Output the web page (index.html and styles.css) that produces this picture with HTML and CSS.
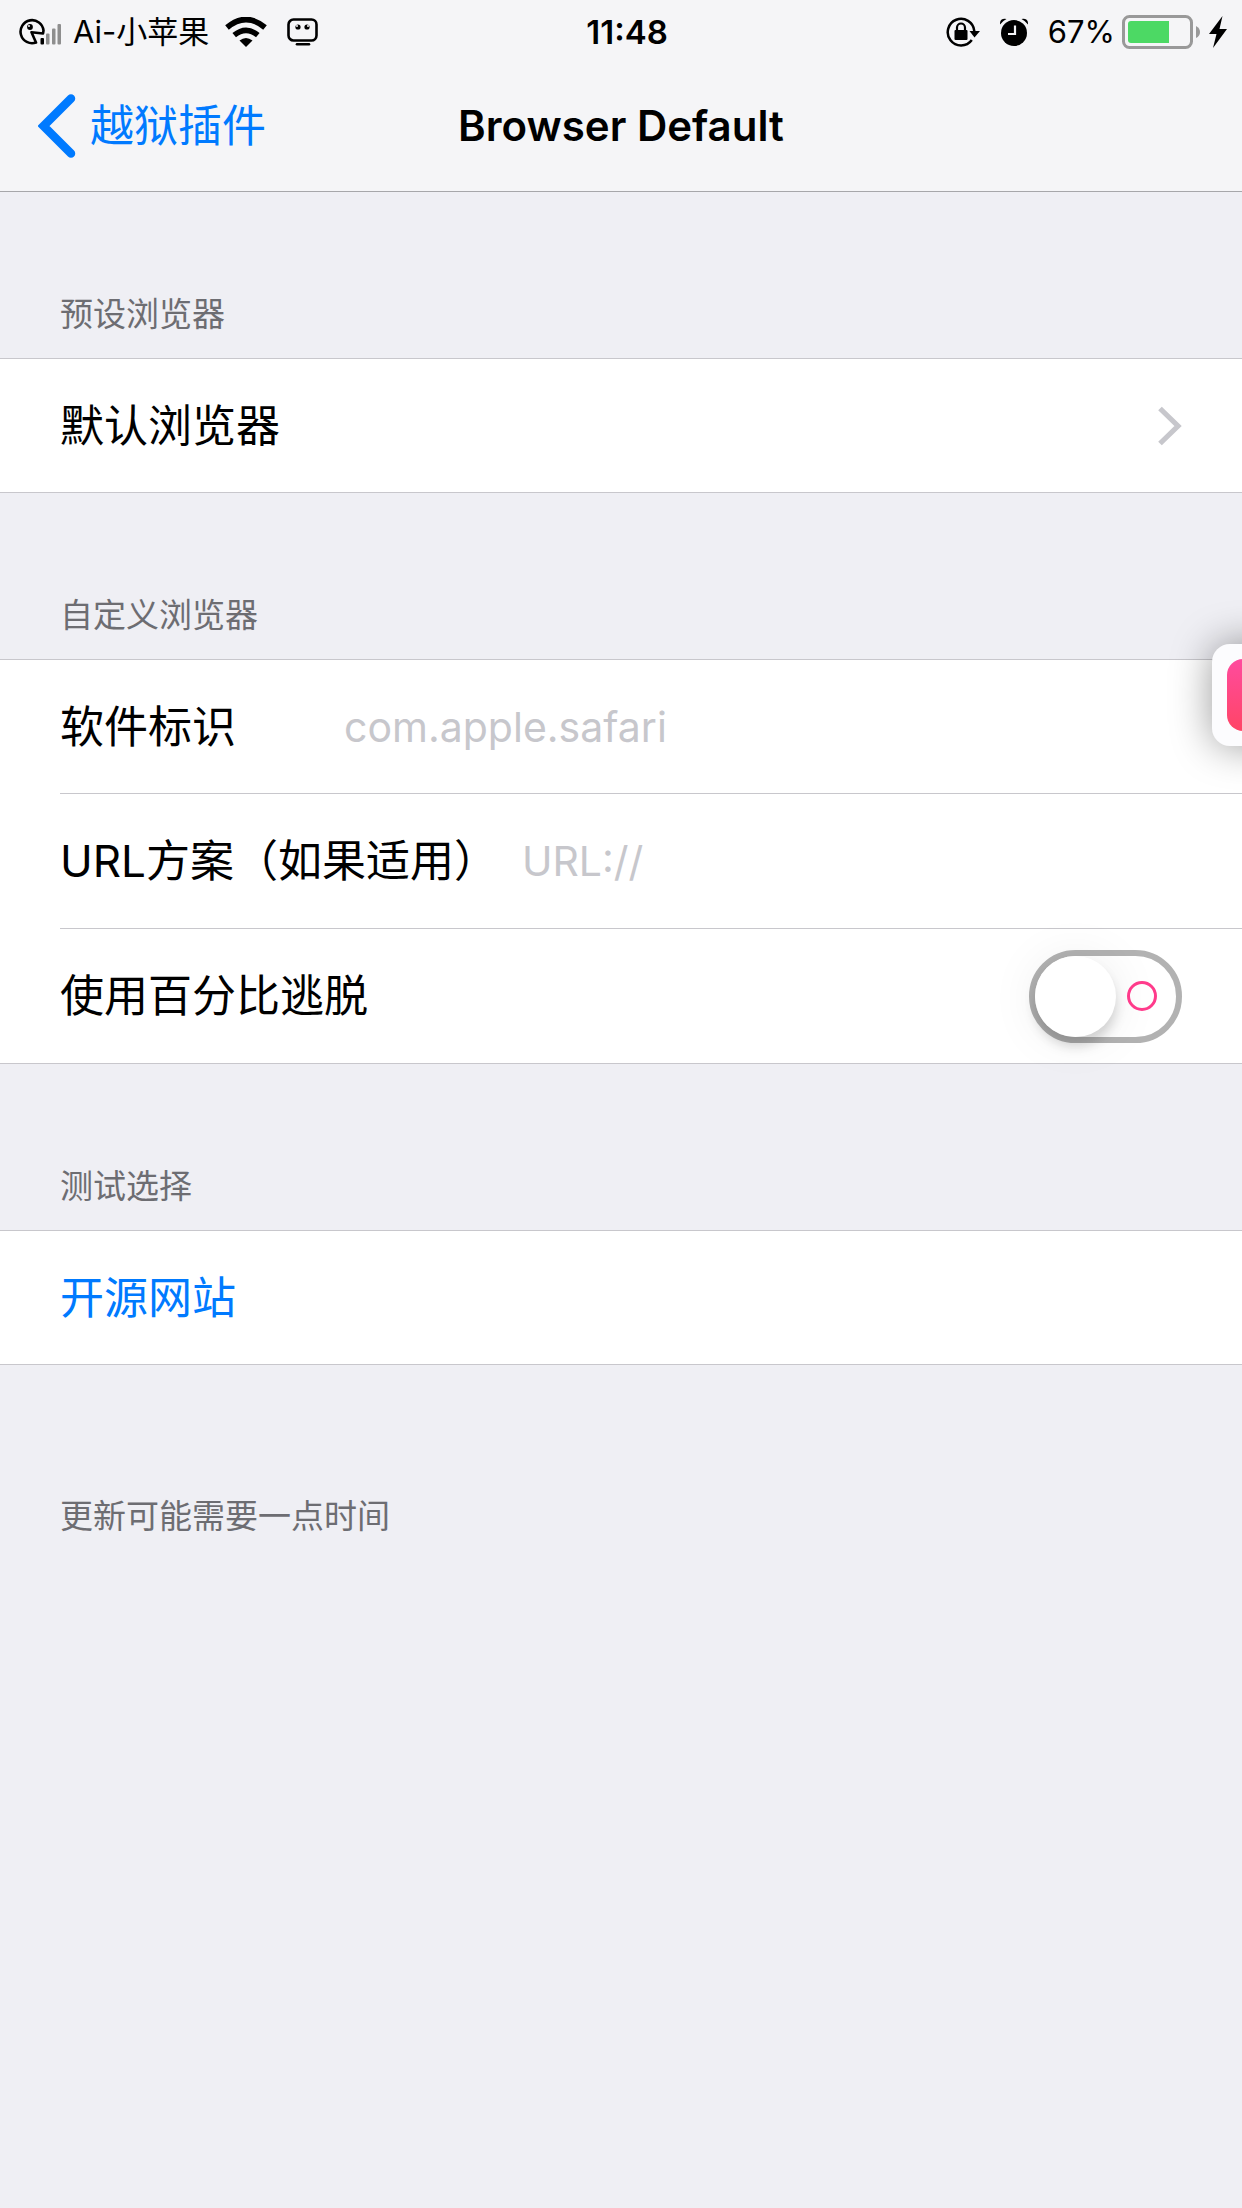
FILE: index.html
```html
<!DOCTYPE html>
<html lang="zh-CN">
<head>
  <meta charset="utf-8">
  <meta name="viewport" content="width=device-width, initial-scale=1">
  <title>Browser Default</title>
  <link rel="stylesheet" href="styles.css">
</head>
<body>
  <header class="top">
    <div class="status">
      <div class="status-left">
        <svg class="icon-signal" width="44" height="28" viewBox="0 0 44 28" aria-hidden="true">
          <path d="M24.500 12.500A11.500 11.500 0 1 0 17 24.500L12.500 14.200L24 15.500Z" fill="none" stroke="#000" stroke-width="2.600" stroke-linejoin="round"/>
          <circle cx="11" cy="9" r="2.900"/>
          <circle cx="10" cy="8" r="1" fill="#f5f5f7"/>
          <rect x="21.500" y="20" width="3.500" height="6.500" rx="1"/>
          <g fill="#8e8e8e">
            <rect x="27" y="15.500" width="3.500" height="11" rx="1"/>
            <rect x="33" y="10.500" width="3.500" height="16" rx="1"/>
            <rect x="38.500" y="6" width="3.500" height="20.500" rx="1"/>
          </g>
        </svg>
        <span class="carrier">Ai-小苹果</span>
        <svg class="icon-wifi" width="42" height="30" viewBox="0 0 42 30" aria-hidden="true">
          <path d="M2 10.500Q21-5.500 40 10.500M9.200 18.200Q21 8.500 32.800 18.200" fill="none" stroke="#000" stroke-width="5.600"/>
          <path d="M21 30L14.500 23.500Q21 18.500 27.500 23.500Z"/>
        </svg>
        <svg width="32" height="28" viewBox="0 0 32 28" aria-hidden="true">
          <rect x="1.500" y="1.500" width="28" height="21" rx="5" fill="none" stroke="#000" stroke-width="2.600"/>
          <circle cx="11" cy="9" r="2.600"/><circle cx="20" cy="9" r="2.600"/>
          <circle cx="10" cy="8" r="1" fill="#f5f5f7"/><circle cx="21" cy="8" r="1" fill="#f5f5f7"/>
          <path d="M10 26.200H22" stroke="#000" stroke-width="2.600" stroke-linecap="round"/>
        </svg>
      </div>
      <time class="clock">11:48</time>
      <div class="status-right">
        <svg width="34" height="30" viewBox="0 0 34 30" aria-hidden="true">
          <path d="M28.300 14A13.300 13.300 0 1 0 25.800 23" fill="none" stroke="#000" stroke-width="2.500"/>
          <path d="M23.500 14H34L28.500 20.500Z"/>
          <rect x="8.500" y="13" width="13" height="10" rx="1"/>
          <path d="M11 14V10.500A4 4 0 0 1 19 10.500V14" fill="none" stroke="#000" stroke-width="2.200"/>
        </svg>
        <svg width="28" height="28" viewBox="0 0 28 28" aria-hidden="true">
          <circle cx="14" cy="15" r="13"/>
          <path d="M0 6.500Q-.5 0 6.500 1Q2.500 3 0 6.500ZM28 6.500Q28.500 0 21.500 1Q25.500 3 28 6.500Z"/>
          <path d="M15 7.500V16H8" fill="none" stroke="#f5f5f7" stroke-width="2.200"/>
        </svg>
        <span class="percent">67%</span>
        <svg class="icon-battery" width="78" height="34" viewBox="0 0 78 34" aria-hidden="true">
          <rect x="1.500" y="1.500" width="68" height="31" rx="6" fill="none" stroke="#999" stroke-width="3"/>
          <path d="M9 6H47V28H9Q6 28 6 25V9Q6 6 9 6Z" fill="#4cd964"/>
          <path d="M74 11Q78 13 78 17T74 23Z" fill="#999"/>
        </svg>
        <svg class="icon-bolt" width="18" height="32" viewBox="0 0 18 32" aria-hidden="true">
          <path d="M13.500 0L0 18H7.500L4 32L18 13H10.500Z"/>
        </svg>
      </div>
    </div>
    <nav class="navbar">
      <a class="back" href="#">
        <svg width="38" height="64" viewBox="0 0 38 64" aria-hidden="true">
          <path d="M33 4.500L5.500 32L33 59.500" fill="none" stroke="#007aff" stroke-width="8.500" stroke-linecap="round" stroke-linejoin="miter"/>
        </svg>
        <span>越狱插件</span>
      </a>
      <h1 class="title">Browser Default</h1>
    </nav>
  </header>

  <main>
    <section>
      <h2 class="group-title">预设浏览器</h2>
      <div class="group">
        <a class="row" href="#">
          <span class="grow">默认浏览器</span>
          <svg width="24" height="40" viewBox="0 0 24 40" aria-hidden="true">
            <path d="M2 2.500L20 20L2 37.500" fill="none" stroke="#c7c7cc" stroke-width="5.200"/>
          </svg>
        </a>
      </div>
    </section>

    <section>
      <h2 class="group-title">自定义浏览器</h2>
      <div class="group">
        <div class="row">
          <label class="label" for="bundle">软件标识</label>
          <input class="field" id="bundle" type="text" placeholder="com.apple.safari">
        </div>
        <div class="row">
          <label class="label" for="scheme">URL方案（如果适用）</label>
          <input class="field" id="scheme" type="text" placeholder="URL://">
        </div>
        <div class="row">
          <label class="grow" for="escape">使用百分比逃脱</label>
          <input class="switch" id="escape" type="checkbox" role="switch">
        </div>
      </div>
    </section>

    <section>
      <h2 class="group-title">测试选择</h2>
      <div class="group">
        <a class="row link" href="#">开源网站</a>
      </div>
      <p class="note">更新可能需要一点时间</p>
    </section>
  </main>

  <button class="floater" type="button" aria-label="悬浮窗"></button>
</body>
</html>
```
FILE: styles.css
```css
*,
*::before,
*::after {
  box-sizing: border-box;
}

body {
  margin: 0;
  min-height: 100vh;
  background: #efeff4;
  color: #000;
  font-family: Inter, "Noto Sans CJK SC", sans-serif;
  font-size: 44px;
  line-height: 60px;
}

h1,
h2,
p {
  margin: 0;
  font-weight: 400;
}

a {
  color: inherit;
  text-decoration: none;
}

svg {
  display: block;
  flex: none;
}

/* Status bar and navigation bar */
.top {
  background: #f5f5f7;
  border-bottom: 1px solid #a7a7aa;
}

.status {
  display: grid;
  grid-template-columns: 1fr auto 1fr;
  align-items: center;
  height: 60px;
  padding: 2px 15px 0 19px;
  font-size: 31px;
}

.status-left,
.status-right {
  display: flex;
  align-items: center;
}

.status-right {
  justify-content: flex-end;
  gap: 20px;
}

.carrier {
  margin: 0 16px 0 10px;
}

.icon-wifi {
  margin-right: 20px;
}

.clock {
  padding-left: 8px;
  font-size: 33px;
  font-weight: 600;
}

.icon-battery {
  margin-left: -13px;
}

.icon-bolt {
  margin-left: -11px;
}

.navbar {
  display: grid;
  grid-template-columns: 1fr auto 1fr;
  align-items: center;
  height: 131px;
  padding: 0 38px;
}

.back {
  display: flex;
  align-items: center;
  gap: 14px;
  color: #007aff;
}

.title {
  font-size: 42px;
  font-weight: 600;
}

/* Grouped list */
.group-title {
  padding: 102px 60px 24px;
  color: #6d6d72;
  font-size: 33px;
  line-height: 40px;
}

.group {
  background: #fff;
  border-bottom: 1px solid #c8c7cc;
  border-top: 1px solid #c8c7cc;
}

.row {
  display: flex;
  align-items: center;
  gap: 24px;
  height: 133px;
  padding-right: 60px;
  margin-left: 60px;
}

.row + .row {
  height: 135px;
  border-top: 1px solid #c8c7cc;
}

.grow {
  flex: 1;
}

.label {
  min-width: 260px;
}

.field {
  flex: 1;
  min-width: 0;
  padding: 0;
  border: 0;
  outline: 0;
  background: transparent;
  color: inherit;
  font: inherit;
  font-size: 41px;
}

.field::placeholder {
  color: #c7c7cc;
  opacity: 1;
}

.link {
  color: #007aff;
}

.note {
  padding: 131px 60px;
  color: #6d6d72;
  font-size: 33px;
  line-height: 40px;
}

/* Switch: knob on the left, ring on the right */
.switch {
  appearance: none;
  display: flex;
  align-items: center;
  justify-content: space-between;
  width: 153px;
  height: 93px;
  margin: 0;
  padding-right: 19px;
  border: 6px solid #b2b2b2;
  border-radius: 47px;
  background: #fff;
}

.switch::before {
  content: "";
  width: 81px;
  height: 81px;
  border-radius: 50%;
  background: #fff;
  box-shadow: 0 9px 12px rgba(0, 0, 0, 0.16), 0 2px 50px rgba(0, 0, 0, 0.08);
}

.switch::after {
  content: "";
  width: 30px;
  height: 30px;
  border: 3px solid #ff3b8b;
  border-radius: 50%;
}

/* Floating button, docked half outside the right edge */
.floater {
  position: fixed;
  top: 644px;
  right: -72px;
  width: 102px;
  height: 102px;
  padding: 15px;
  border: 0;
  border-radius: 18px;
  background: #fcfcfe;
  box-shadow: 0 0 40px rgba(0, 0, 0, 0.4);
}

.floater::before {
  content: "";
  display: block;
  height: 72px;
  border-radius: 16px;
  background: linear-gradient(#ff4b9e, #ff4566);
}
```
